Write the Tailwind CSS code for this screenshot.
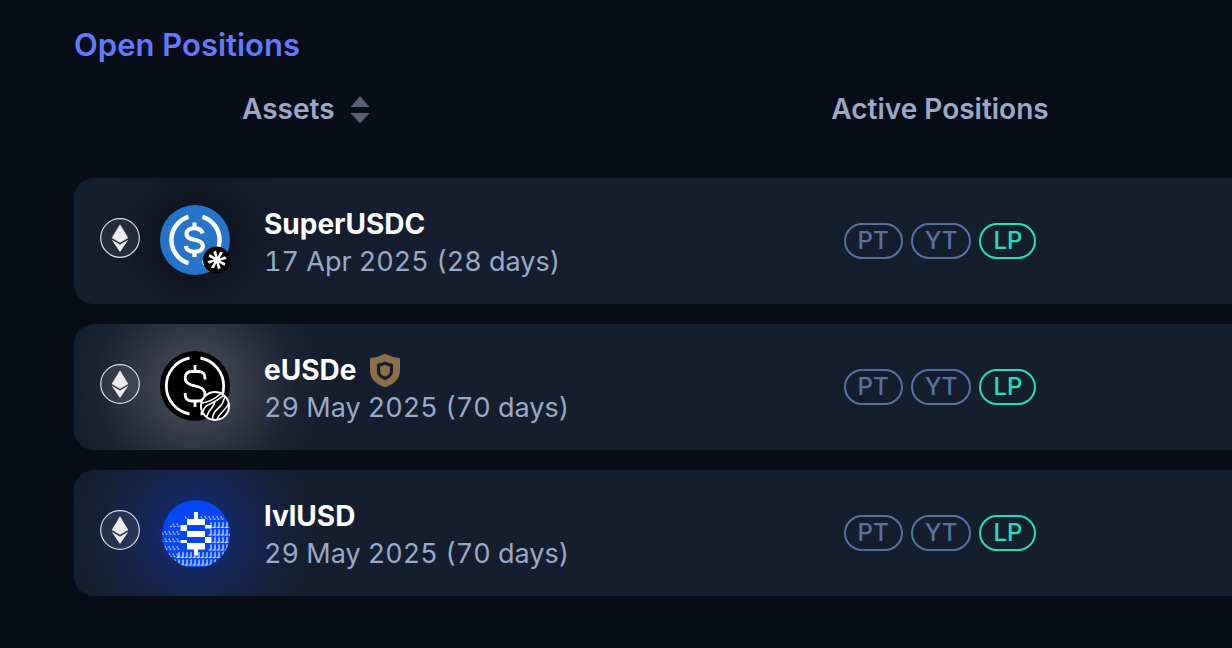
<!DOCTYPE html>
<html lang="en">
<head>
    <meta charset="UTF-8" />
    <meta name="viewport" content="width=device-width, initial-scale=1.0" />
    <title>Open Positions</title>
    <script src="https://cdn.jsdelivr.net/npm/@tailwindcss/browser@4"></script>
</head>
<body class="min-h-screen overflow-x-hidden bg-[#080c16] font-['Inter',sans-serif] text-[#9ba8c7]">

<!-- Shared icons -->
<svg class="hidden" aria-hidden="true">
    <symbol id="eth" viewBox="0 0 40 40">
        <circle cx="20" cy="20" r="19.3" fill="#ffffff" fill-opacity=".08" stroke="#d5d9e4" stroke-width="1.2" />
        <path fill="#ececf2" d="M20 6.3 28.3 20 20 24.8 11.7 20Z" />
        <path fill="#ececf2" d="M11.7 21.8 20 26.6 28.3 21.8 20 34Z" />
    </symbol>
</svg>

<main class="pt-6 pl-[74px]">
    <h2 class="text-[31px] leading-[42px] font-semibold text-[#6079ff]">Open Positions</h2>

    <table class="w-full table-fixed border-separate border-spacing-x-0 border-spacing-y-5">
        <thead>
        <tr class="h-[72px] align-top text-[28px] leading-[46px] font-semibold">
            <th scope="col" class="w-[574px] pl-[168px] text-left font-semibold">
                <button type="button" class="flex items-center gap-4">
                    Assets
                    <svg class="h-7 w-5" viewBox="0 0 20 28" fill="#596173" aria-hidden="true">
                        <path d="M9 1 18.5 12H-.5Z" />
                        <path d="M-.5 18H18.5L9 28.5Z" />
                    </svg>
                </button>
            </th>
            <th scope="col" class="text-center font-semibold">Active Positions</th>
        </tr>
        </thead>
        <tbody>
        <!-- SuperUSDC -->
        <tr class="h-[126px]">
            <td class="rounded-l-[20px] bg-[#151e2e] bg-[radial-gradient(circle_at_121px_62px,#0e131e_0px,#0f1520_35px,#131a27_65px,#151e2e_105px)] pl-[26px]">
                <div class="flex items-center">
                    <svg class="mb-1.5 size-10 shrink-0" role="img" aria-label="Ethereum"><use href="#eth" /></svg>
                    <svg class="mb-0.5 ml-5 size-[70px] shrink-0" viewBox="0 0 70 70" role="img" aria-label="SuperUSDC">
                        <circle cx="35" cy="35" r="35" fill="#2775ca" />
                        <g fill="none" stroke="#fff" stroke-width="4.4" stroke-linecap="butt">
                            <path d="M28.5 11.8A24.3 24.3 0 0 0 28.5 58.2" />
                            <path d="M42.5 11.8A24.3 24.3 0 0 1 42.5 58.2" />
                        </g>
                        <path fill="none" stroke="#fff" stroke-width="4.2" d="M42.5 28.5C41.5 24.5 38 23.2 34.5 23.2 30 23.2 26.5 25.3 26.5 29 26.5 33 30 34 34.5 34.8 39 35.6 42.8 37 42.8 41 42.8 45 39 46.8 34.5 46.8 30 46.8 26.5 45 25.8 41M34.5 17.5V24M34.5 46V52" />
                        <circle cx="56.5" cy="55" r="13.5" fill="#000" />
                        <g fill="#fff" transform="translate(57 55)">
                            <circle r="3.5" />
                            <path id="blade" d="M-.6 0-3.8-8 -1-9.6 1.3 0Z" />
                            <use href="#blade" transform="rotate(45)" />
                            <use href="#blade" transform="rotate(90)" />
                            <use href="#blade" transform="rotate(135)" />
                            <use href="#blade" transform="rotate(180)" />
                            <use href="#blade" transform="rotate(225)" />
                            <use href="#blade" transform="rotate(270)" />
                            <use href="#blade" transform="rotate(315)" />
                        </g>
                    </svg>
                    <div class="ml-[34px] pt-1 text-[28px] leading-[37px]">
                        <div class="font-bold text-white">SuperUSDC</div>
                        <div class="text-[27px] tabular-nums">17 Apr 2025 (28 days)</div>
                    </div>
                </div>
            </td>
            <td class="bg-[#151e2e]">
                <div class="flex justify-center gap-2 text-2xl leading-8 font-medium text-[#5a719e]">
                    <span class="rounded-full border-2 border-current px-3">PT</span>
                    <span class="rounded-full border-2 border-current px-3">YT</span>
                    <span class="rounded-full border-2 border-current px-3 text-[#24e0b8]">LP</span>
                </div>
            </td>
        </tr>

        <!-- eUSDe -->
        <tr class="h-[126px]">
            <td class="rounded-l-[20px] bg-[#151e2e] bg-[radial-gradient(circle_at_121px_62px,#444854_0px,#3c404d_38px,#2a303e_70px,#1b2433_98px,#151e2e_125px)] pl-[26px]">
                <div class="flex items-center">
                    <svg class="mb-1.5 size-10 shrink-0" role="img" aria-label="Ethereum"><use href="#eth" /></svg>
                    <svg class="mb-0.5 ml-5 size-[70px] shrink-0" viewBox="0 0 70 70" role="img" aria-label="eUSDe">
                        <circle cx="35" cy="35" r="35" fill="#000" />
                        <g fill="none" stroke="#fff" stroke-width="2.8">
                            <path d="M29.5 7A28.5 28.5 0 0 0 29.5 63" />
                            <path d="M40.5 7A28.5 28.5 0 0 1 40.5 63" />
                            <path d="M45 28.5V27Q45 20.5 38 20.5H32Q25.2 20.5 25.2 27 25.2 32 31 33.8L39 36Q45 38 45 43.5 45 50 38 50H32Q25.2 50 25.2 43.5V42M35 14V20.5M35 50V56" />
                        </g>
                        <circle cx="55" cy="55" r="14" fill="#000" stroke="#fff" stroke-width="2" />
                        <g fill="none" stroke="#fff" stroke-width="1.6">
                            <path d="M42 52C49 51 56 47 61 42.5" />
                            <path d="M43 61C44 55 48 54 53 51.5 58 49 61 46 64 44.5" />
                            <path d="M47 66C47 60 53 58 55 51" />
                            <path d="M53 69C51 61 59 58 62 53 64 50 64 47 65 46" />
                            <path d="M57 69C59 61 66 60 69 52" />
                        </g>
                    </svg>
                    <div class="ml-[34px] pt-1 text-[28px] leading-[37px]">
                        <div class="flex items-center gap-3 font-bold text-white">
                            eUSDe
                            <svg class="h-[34px] w-8" viewBox="0 0 32 34" role="img" aria-label="Protected">
                                <path fill="#8d7048" stroke="#8d7048" stroke-width="2" stroke-linejoin="round" d="M17 .8Q24 4.5 31 5V16C31 24 25 29.5 17 32.2 9 29.5 3 24 3 16V5Q10 4.5 17 .8Z" />
                                <path fill="none" stroke="#161e2e" stroke-width="3.2" stroke-linejoin="round" d="M17 9Q20 11 23.5 11.2V17C23.5 20.5 20.8 23 17 24.5 13.2 23 10.5 20.5 10.5 17V11.2Q14 11 17 9Z" />
                            </svg>
                        </div>
                        <div class="text-[27px] tabular-nums">29 May 2025 (70 days)</div>
                    </div>
                </div>
            </td>
            <td class="bg-[#151e2e]">
                <div class="flex justify-center gap-2 text-2xl leading-8 font-medium text-[#5a719e]">
                    <span class="rounded-full border-2 border-current px-3">PT</span>
                    <span class="rounded-full border-2 border-current px-3">YT</span>
                    <span class="rounded-full border-2 border-current px-3 text-[#24e0b8]">LP</span>
                </div>
            </td>
        </tr>

        <!-- lvlUSD -->
        <tr class="h-[126px]">
            <td class="rounded-l-[20px] bg-[#151e2e] bg-[radial-gradient(circle_at_121px_62px,#132a70_0px,#142862_35px,#15244b_65px,#152038_95px,#151e2e_120px)] pl-[26px]">
                <div class="flex items-center">
                    <svg class="mb-1.5 size-10 shrink-0" role="img" aria-label="Ethereum"><use href="#eth" /></svg>
                    <svg class="mb-0.5 ml-5 size-[70px] shrink-0" viewBox="0 0 70 70" role="img" aria-label="lvlUSD">
                        <defs>
                            <clipPath id="coin"><circle cx="36" cy="37" r="34" /></clipPath>
                            <pattern id="tall" width="4" height="7.5" patternUnits="userSpaceOnUse" y="2">
                                <path fill="none" stroke="#dce5ff" stroke-width="1.2" d="M3 .5V6H.6" />
                            </pattern>
                            <pattern id="small" width="4" height="7.5" patternUnits="userSpaceOnUse" y="2">
                                <path fill="none" stroke="#dce5ff" stroke-width="1.2" d="M.5 3H2M1.5 5H3.4" />
                            </pattern>
                        </defs>
                        <g clip-path="url(#coin)">
                            <rect width="70" height="70" y="1" fill="#0546f5" />
                            <path fill="url(#small)" d="M39 17H64V24.5H39ZM25 17H29V24.5H25ZM10 24.5H20V32H10ZM0 32H20V54.5H0ZM5 54.5H20V62H5Z" />
                            <path fill="url(#tall)" d="M48 24.5H70V54.5H48ZM16 54.5H70V62H16ZM8 62H64V69.5H8Z" />
                            <rect x="25" y="22" width="22" height="33" fill="#0546f5" />
                            <g fill="#fff">
                                <path d="M34 15H38V22H45V28H27V22H34Z" />
                                <rect x="20.5" y="28" width="6.5" height="6" />
                                <rect x="45" y="28" width="6.5" height="3.5" />
                                <rect x="27" y="34" width="18" height="6" />
                                <rect x="45" y="40" width="6" height="6" />
                                <rect x="20.5" y="43" width="6.5" height="3" />
                                <path d="M27 46H45V52.5H38V58.5H34V52.5H27Z" />
                            </g>
                        </g>
                    </svg>
                    <div class="ml-[34px] pt-1 text-[28px] leading-[37px]">
                        <div class="font-bold text-white">lvlUSD</div>
                        <div class="text-[27px] tabular-nums">29 May 2025 (70 days)</div>
                    </div>
                </div>
            </td>
            <td class="bg-[#151e2e]">
                <div class="flex justify-center gap-2 text-2xl leading-8 font-medium text-[#5a719e]">
                    <span class="rounded-full border-2 border-current px-3">PT</span>
                    <span class="rounded-full border-2 border-current px-3">YT</span>
                    <span class="rounded-full border-2 border-current px-3 text-[#24e0b8]">LP</span>
                </div>
            </td>
        </tr>
        </tbody>
    </table>
</main>

</body>
</html>
